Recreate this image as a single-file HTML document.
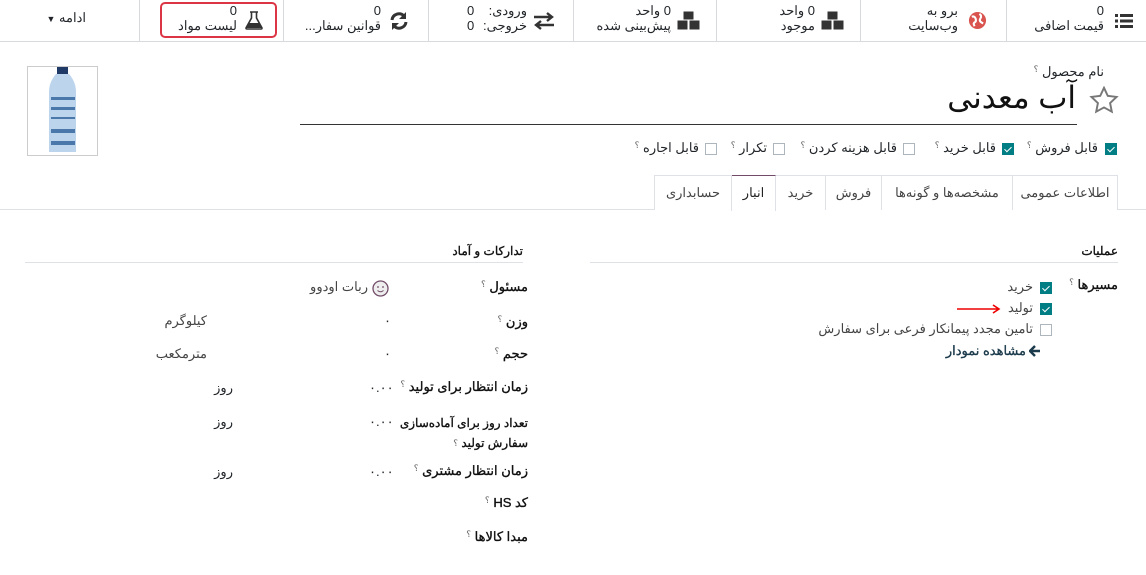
<!DOCTYPE html>
<html><head><meta charset="utf-8">
<style>
*{margin:0;padding:0;box-sizing:border-box}
body{width:1146px;height:575px;background:#fff;position:relative;overflow:hidden;font-family:"Liberation Sans","Noto Sans CJK SC",sans-serif;color:#212529;font-size:13px}
.a{position:absolute;white-space:nowrap}
.r{direction:rtl}
.sep{position:absolute;top:0;width:1px;height:41px;background:#d8dadd}
.cb{position:absolute;width:12px;height:12px;border:1px solid #adb5bd;background:#fff}
.cb.on{background:#017e84;border-color:#017e84}
.cb.on::after{content:"";position:absolute;left:3px;top:1px;width:3px;height:6px;border:solid #fff;border-width:0 1.5px 1.5px 0;transform:rotate(45deg)}
.q{font-size:9px;color:#666;vertical-align:top;font-weight:normal;-webkit-text-stroke:0}
.lbl{font-weight:normal;color:#111;font-size:13px;-webkit-text-stroke:0.35px #111}
.tab{position:absolute;top:175px;height:35px;border:1px solid #dee2e6;border-bottom:none;line-height:33px;text-align:center;font-size:13px;color:#444;background:#fff}
</style></head><body>
<div class="a" style="left:0;top:41px;width:1146px;height:1px;background:#d8dadd"></div>
<div class="sep" style="left:139px"></div><div class="sep" style="left:283px"></div><div class="sep" style="left:428px"></div><div class="sep" style="left:573px"></div><div class="sep" style="left:716px"></div><div class="sep" style="left:860px"></div><div class="sep" style="left:1006px"></div>

<svg class="a" style="left:1115px;top:13px" width="18" height="16" viewBox="0 0 18 16"><g fill="#333"><rect x="0" y="1" width="3" height="3"/><rect x="5" y="1" width="13" height="3"/><rect x="0" y="6.5" width="3" height="3"/><rect x="5" y="6.5" width="13" height="3"/><rect x="0" y="12" width="3" height="3"/><rect x="5" y="12" width="13" height="3"/></g></svg>
<div class="a r" style="right:42px;top:3px;line-height:15px;text-align:right">0<br>قیمت اضافی</div>
<svg class="a" style="left:968px;top:11px" width="19" height="19" viewBox="0 0 20 20"><circle cx="10" cy="10" r="9" fill="#d9534f"/><path d="M4 6q3-1 4 2t-1 4q-2 1 0 4M12 3q3 2 1 5t3 5" stroke="#fff" stroke-width="2.2" fill="none"/></svg>
<div class="a r" style="right:188px;top:3px;line-height:15px;text-align:right">برو به<br>وب‌سایت</div>
<svg class="a" style="left:820px;top:10px" width="26" height="22" viewBox="0 0 26 22"><g fill="#333" stroke="#fff" stroke-width="1"><rect x="7" y="1" width="11" height="10"/><rect x="1" y="10" width="11" height="10"/><rect x="13" y="10" width="11" height="10"/></g></svg>
<div class="a r" style="right:331px;top:3px;line-height:15px;text-align:right">0 واحد<br>موجود</div>
<svg class="a" style="left:676px;top:10px" width="26" height="22" viewBox="0 0 26 22"><g fill="#333" stroke="#fff" stroke-width="1"><rect x="7" y="1" width="11" height="10"/><rect x="1" y="10" width="11" height="10"/><rect x="13" y="10" width="11" height="10"/></g></svg>
<div class="a r" style="right:475px;top:3px;line-height:15px;text-align:right">0 واحد<br>پیش‌بینی شده</div>
<svg class="a" style="left:533px;top:12px" width="22" height="18" viewBox="0 0 22 18"><path d="M1 5h17M14 1l5 4-5 4M21 13H4M8 9l-5 4 5 4" stroke="#333" stroke-width="2.4" fill="none"/></svg>
<div class="a r" style="right:619px;top:3px;line-height:15px;text-align:right">ورودی:<br>خروجی:</div>
<div class="a" style="left:467px;top:3px;line-height:15px">0<br>0</div>
<svg class="a" style="left:389px;top:11px" width="20" height="20" viewBox="0 0 20 20"><path d="M3 9a7 7 0 0 1 12-4M17 11a7 7 0 0 1-12 4" stroke="#333" stroke-width="3" fill="none"/><path d="M17 1v7h-7zM3 19v-7h7z" fill="#333"/></svg>
<div class="a r" style="right:765px;top:3px;line-height:15px;text-align:right">0<br>قوانین سفار...</div>
<div class="a" style="left:160px;top:2px;width:117px;height:36px;border:2px solid #dc3545;border-radius:5px"></div>
<svg class="a" style="left:245px;top:11px" width="18" height="19" viewBox="0 0 18 19"><path d="M5 1h8M6.5 1v6L1 17q0 1 1 1h14q1 0 1-1L11.5 7V1" stroke="#333" stroke-width="1.6" fill="none"/><path d="M4 12h10l3 5H1z" fill="#333"/></svg>
<div class="a r" style="right:909px;top:3px;line-height:15px;text-align:right">0<br>لیست مواد</div>
<div class="a r" style="right:1060px;top:10px">ادامه <span style="font-size:9px">▼</span></div>

<div class="a" style="left:27px;top:66px;width:71px;height:90px;border:1px solid #ccc"></div>
<svg class="a" style="left:45px;top:67px" width="36" height="88" viewBox="0 0 36 88"><rect x="12" y="0" width="11" height="7" fill="#1f3a66"/><path d="M11 7h13q7 8 7 18v60H4V25q0-10 7-18z" fill="#bcd4ec"/><g fill="#4a78aa"><rect x="6" y="30" width="24" height="3"/><rect x="6" y="40" width="24" height="3"/><rect x="6" y="50" width="24" height="2"/><rect x="6" y="62" width="24" height="4"/><rect x="6" y="74" width="24" height="4"/></g></svg>

<div class="a r" style="right:42px;top:64px;font-size:13px">نام محصول <span class="q">؟</span></div>
<div class="a r" style="right:70px;top:80px;font-size:31px;color:#111">آب معدنی</div>
<svg class="a" style="left:1089px;top:86px" width="30" height="28" viewBox="0 0 24 23"><path d="M12 1.5l3.1 6.6 7.2.9-5.3 5 1.4 7.1L12 17.6l-6.4 3.5 1.4-7.1-5.3-5 7.2-.9z" fill="none" stroke="#777" stroke-width="1.6"/></svg>
<div class="a" style="left:300px;top:124px;width:777px;height:1px;background:#333"></div>

<div class="cb on" style="left:1105px;top:143px"></div><div class="a r" style="right:48px;top:140px">قابل فروش <span class="q">؟</span></div>
<div class="cb on" style="left:1002px;top:143px"></div><div class="a r" style="right:150px;top:140px">قابل خرید <span class="q">؟</span></div>
<div class="cb" style="left:903px;top:143px"></div><div class="a r" style="right:249px;top:140px">قابل هزینه کردن <span class="q">؟</span></div>
<div class="cb" style="left:773px;top:143px"></div><div class="a r" style="right:379px;top:140px">تکرار <span class="q">؟</span></div>
<div class="cb" style="left:705px;top:143px"></div><div class="a r" style="right:447px;top:140px">قابل اجاره <span class="q">؟</span></div>

<div class="a" style="left:0;top:209px;width:1146px;height:1px;background:#dee2e6"></div>
<div class="tab" style="left:1012px;width:106px">اطلاعات عمومی</div>
<div class="tab" style="left:881px;width:132px">مشخصه‌ها و گونه‌ها</div>
<div class="tab" style="left:825px;width:57px">فروش</div>
<div class="tab" style="left:775px;width:51px">خرید</div>
<div class="tab" style="left:731px;width:45px;height:36px;border-top:1px solid #714b67;color:#222">انبار</div>
<div class="tab" style="left:654px;width:78px">حسابداری</div>

<div class="a r lbl" style="right:28px;top:244px;font-size:12px">عملیات</div>
<div class="a" style="left:590px;top:262px;width:528px;height:1px;background:#dee2e6"></div>
<div class="a r lbl" style="right:28px;top:277px">مسیرها <span class="q">؟</span></div>
<div class="cb on" style="left:1040px;top:282px"></div><div class="a r" style="right:113px;top:279px;color:#444">خرید</div>
<div class="cb on" style="left:1040px;top:303px"></div><div class="a r" style="right:113px;top:300px;color:#444">تولید</div>
<div class="cb" style="left:1040px;top:324px"></div><div class="a r" style="right:113px;top:321px;color:#444">تامین مجدد پیمانکار فرعی برای سفارش</div>
<svg class="a" style="left:1029px;top:345px" width="12" height="12" viewBox="0 0 12 12"><path d="M6 1L1 6l5 5M1 6h10" stroke="#1b3a4b" stroke-width="2.4" fill="none"/></svg>
<div class="a r lbl" style="right:120px;top:343px;color:#1b3a4b;-webkit-text-stroke:0.35px #1b3a4b">مشاهده نمودار</div>
<svg class="a" style="left:957px;top:304px" width="44" height="10" viewBox="0 0 44 10"><path d="M0 5h42M36 1l6 4-6 4" stroke="#e00" stroke-width="1.6" fill="none"/></svg>

<div class="a r lbl" style="right:623px;top:244px;font-size:12px">تدارکات و آماد</div>
<div class="a" style="left:25px;top:262px;width:498px;height:1px;background:#dee2e6"></div>
<div class="a r lbl" style="right:618px;top:279px">مسئول <span class="q">؟</span></div>
<svg class="a" style="left:372px;top:280px" width="17" height="17" viewBox="0 0 17 17"><circle cx="8.5" cy="8.5" r="7.5" fill="#eee" stroke="#714b67" stroke-width="1.3"/><circle cx="6" cy="7" r=".9" fill="#714b67"/><circle cx="11" cy="7" r=".9" fill="#714b67"/><path d="M5.5 10.5q3 2.5 6 0" stroke="#714b67" fill="none"/></svg>
<div class="a r" style="right:778px;top:279px;color:#444">ربات اودوو</div>
<div class="a r lbl" style="right:618px;top:314px">وزن <span class="q">؟</span></div>
<div class="a" style="left:384px;top:313px">۰</div><div class="a r" style="right:939px;top:313px;color:#444">کیلوگرم</div>
<div class="a r lbl" style="right:618px;top:346px">حجم <span class="q">؟</span></div>
<div class="a" style="left:384px;top:346px">۰</div><div class="a r" style="right:939px;top:346px;color:#444">مترمکعب</div>
<div class="a r lbl" style="right:618px;top:379px">زمان انتظار برای تولید <span class="q">؟</span></div>
<div class="a" style="left:369px;top:380px;direction:ltr">۰.۰۰</div><div class="a r" style="right:913px;top:380px">روز</div>
<div class="a r lbl" style="right:618px;top:413px;line-height:20px;text-align:right;font-size:12px">تعداد روز برای آماده‌سازی<br>سفارش تولید <span class="q">؟</span></div>
<div class="a" style="left:369px;top:414px;direction:ltr">۰.۰۰</div><div class="a r" style="right:913px;top:414px">روز</div>
<div class="a r lbl" style="right:618px;top:463px">زمان انتظار مشتری <span class="q">؟</span></div>
<div class="a" style="left:369px;top:464px;direction:ltr">۰.۰۰</div><div class="a r" style="right:913px;top:464px">روز</div>
<div class="a r lbl" style="right:618px;top:495px">کد HS <span class="q">؟</span></div>
<div class="a r lbl" style="right:618px;top:529px">مبدا کالاها <span class="q">؟</span></div>
</body></html>
